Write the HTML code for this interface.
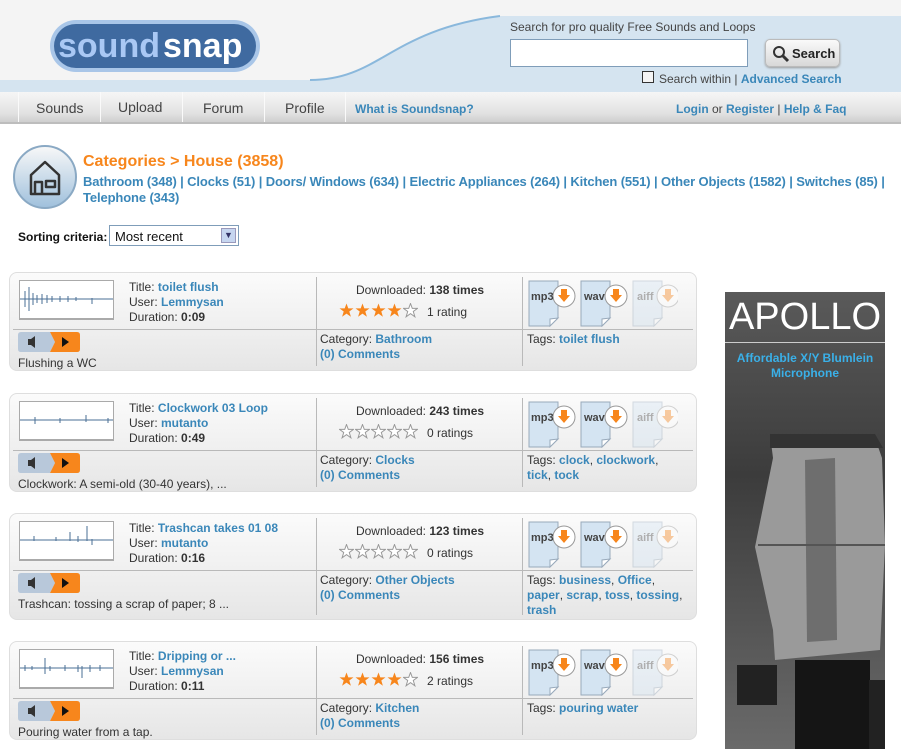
<!DOCTYPE html>
<html><head><meta charset="utf-8"><style>
*{margin:0;padding:0;box-sizing:border-box}
body{width:901px;height:749px;overflow:hidden;background:#fff;font-family:"Liberation Sans",Arial,sans-serif;font-size:12px;color:#333;position:relative}
a{color:#3a87b9;text-decoration:none;font-weight:bold}
.abs{position:absolute}
.hdr{left:0;top:0;width:901px;height:92px;background:#f4f4f4}
.nav{left:0;top:92px;width:901px;height:32px;background:linear-gradient(#f6f6f6,#e2e2e2 70%,#cfcfcf);border-bottom:2px solid #bdbdbd}
.nav .it{position:absolute;top:8px;font-size:14px;color:#444}
.sep{position:absolute;top:0;width:1px;height:30px;background:#d0d0d0;border-right:1px solid #fafafa}
.card{position:absolute;left:9px;width:688px;border-radius:8px;background:linear-gradient(#fbfbfb,#e6e6e6);border:1px solid #dedede}
.card .v{position:absolute;width:1px;background:#b9b9b9;top:4px;bottom:4px}
.card .h{position:absolute;left:3px;right:3px;top:56px;height:1px;background:#b9b9b9}
.wf{position:absolute;left:9px;top:7px;width:95px;height:40px;background:#fff;border:1px solid #aaa;border-bottom:2px solid #aaa}
.meta{position:absolute;left:119px;top:7px;line-height:15px;font-size:12px}
.dl{position:absolute;left:310px;width:200px;top:10px;text-align:center;font-size:12px}
.stars{position:absolute;left:329px;top:30px}
.rt{position:absolute;left:417px;top:32px}
.icons{position:absolute;left:518px;top:7px}
.play{position:absolute;left:8px;top:59px;width:62px;height:20px}
.desc{position:absolute;left:8px;top:83px}
.cat{position:absolute;left:310px;top:59px;line-height:15px}
.tag{position:absolute;left:517px;top:59px;line-height:15px;width:160px}
</style></head><body>
<svg width="0" height="0" style="position:absolute">
<defs>
<symbol id="st" viewBox="0 0 15 15"><path d="M7.5 0.5L9.3 5.4H14.5L10.3 8.5L11.9 13.8L7.5 10.6L3.1 13.8L4.7 8.5L0.5 5.4H5.7Z"/></symbol>
<symbol id="pg" viewBox="0 0 50 47"><path d="M1 1H30V38L22 46H1Z" fill="#d4e4f2" stroke="#9ab"/><path d="M30 38L22 46V39Z" fill="#fff" stroke="#9ab"/><circle cx="36" cy="16" r="11" fill="#fff" stroke="#999"/><path d="M33 9H39V15H42L36 22L30 15H33Z" fill="#f7861c"/></symbol>
</defs></svg>
<div class="abs hdr"></div>
<svg class="abs" style="left:0;top:0" width="901" height="93">
<path d="M0 80 H310 C380 80 390 30 500 16 V92 H0Z" fill="#d5e4f0"/>
<path d="M310 80 C380 80 390 30 500 16" fill="none" stroke="#8ab8dc" stroke-width="2"/>
<rect x="500" y="16" width="401" height="76" fill="#d5e4f0"/>
<g>
<rect x="50" y="20" width="210" height="52" rx="26" fill="#a9c6e8"/>
<rect x="54" y="24" width="202" height="44" rx="22" fill="#3f6aa0"/>
<text x="58" y="57" font-family="Liberation Sans" font-weight="bold" font-size="34" fill="#a9c8f4">sound</text>
<text x="163" y="57" font-family="Liberation Sans" font-weight="bold" font-size="34" fill="#fff">snap</text>
</g></svg>
<div class="abs" style="left:510px;top:20px;font-size:12px;color:#444">Search for pro quality Free Sounds and Loops</div>
<div class="abs" style="left:510px;top:39px;width:238px;height:28px;background:#fff;border:1px solid #7f9db9"></div>
<div class="abs" style="left:765px;top:39px;width:75px;height:28px;border-radius:5px;background:linear-gradient(#fafafa,#d8d8d8);border:1px solid #bbb;box-shadow:0 1px 2px #999;font-weight:bold;font-size:13px;color:#222;padding:6px 0 0 26px">Search</div>
<svg class="abs" style="left:772px;top:45px" width="18" height="18"><circle cx="7" cy="7" r="5" fill="none" stroke="#333" stroke-width="2"/><path d="M11 11 L16 16" stroke="#333" stroke-width="3"/></svg>
<div class="abs" style="left:642px;top:71px;width:12px;height:12px;border:1px solid #333;background:#f4f4f4"></div>
<div class="abs" style="left:659px;top:72px;color:#444">Search within | <a>Advanced Search</a></div>
<div class="abs nav">
<div class="sep" style="left:18px"></div><span class="it" style="left:36px">Sounds</span>
<div class="sep" style="left:100px"></div><span class="it" style="left:118px;top:7px">Upload</span>
<div class="sep" style="left:182px"></div><span class="it" style="left:203px">Forum</span>
<div class="sep" style="left:264px"></div><span class="it" style="left:285px">Profile</span>
<div class="sep" style="left:345px"></div><a class="it" style="left:355px;top:10px;font-size:12px;color:#3a87b9">What is Soundsnap?</a>
<span class="it" style="left:676px;top:10px;font-size:12px"><a>Login</a> or <a>Register</a> | <a>Help &amp; Faq</a></span>
</div>
<svg class="abs" style="left:12px;top:144px" width="66" height="66"><defs><linearGradient id="g" x1="0" y1="0" x2="0" y2="1"><stop offset="0" stop-color="#f8f8f8"/><stop offset="1" stop-color="#9fc0dc"/></linearGradient></defs>
<circle cx="33" cy="33" r="31" fill="url(#g)" stroke="#8aa9c4" stroke-width="2"/>
<path d="M19 50 V31 L33 18 L47 31 V50 Z M23 50 V38 H30 V50 M34 37 H43 V43 H34Z" fill="none" stroke="#333" stroke-width="2.5" stroke-linejoin="round"/></svg>
<div class="abs" style="left:83px;top:153px;font-size:16px;font-weight:bold;color:#f7861c">Categories &gt; House (3858)</div>
<div class="abs" style="left:83px;top:174px;width:818px;line-height:16px;font-size:13px;letter-spacing:-0.12px;color:#3a87b9;font-weight:bold">Bathroom (348) | Clocks (51) | Doors/ Windows (634) | Electric Appliances (264) | Kitchen (551) | Other Objects (1582) | Switches (85) |<br>Telephone (343)</div>
<div class="abs" style="left:18px;top:230px;font-weight:bold;color:#111">Sorting criteria:</div>
<div class="abs" style="left:109px;top:225px;width:130px;height:21px;border:1px solid #7f9db9;background:#fff;font-size:13px;padding:3px 5px;color:#111">Most recent</div>
<div class="abs" style="left:221px;top:228px;width:15px;height:15px;background:#c6d6f0;border:1px solid #99b;font-size:9px;color:#336;text-align:center;line-height:13px">&#9660;</div>

<!-- ad -->
<div class="abs" style="left:725px;top:292px;width:160px;height:457px;background:linear-gradient(#5a5a5a,#3c3c3c 40%,#6a6a6a)"></div>
<div class="abs" style="left:725px;top:296px;width:160px;text-align:center;font-size:38px;color:#fff;letter-spacing:0">APOLLO</div>
<div class="abs" style="left:725px;top:342px;width:160px;height:1px;background:#ccc"></div>
<div class="abs" style="left:725px;top:351px;width:160px;text-align:center;font-size:12px;font-weight:bold;color:#3ab0e8;line-height:15px">Affordable X/Y Blumlein<br>Microphone</div>
<svg class="abs" style="left:725px;top:430px" width="160" height="319">
<path d="M46 12 L150 8 L157 28 L160 115 L155 220 L50 230 L48 200 L30 117 L48 28Z" fill="#9a9a9a"/>
<path d="M80 30 L110 28 L112 210 L82 212Z" fill="#6e6e6e"/>
<path d="M45 4 H150 L158 18 H45Z" fill="#333"/>
<path d="M33 115 H160" stroke="#555" stroke-width="2"/>
<rect x="70" y="230" width="75" height="89" fill="#151515"/>
<rect x="12" y="235" width="40" height="40" fill="#222"/>
<rect x="144" y="250" width="16" height="69" fill="#222"/>
</svg>

<div class="card" style="top:272px;height:99px">
<div class="v" style="left:306px"></div><div class="v" style="left:512px"></div><div class="h"></div>
<div class="wf"><svg width="93" height="37"><path d="M0 18H93" stroke="#4a6f95"/><path d="M5 10V26M9 6V30M13 12V24M17 14V22M22 13V23M27 14V22M32 15V21M40 15V21M48 15V21M56 16V20M72 17V23" stroke="#4a6f95"/></svg></div>
<div class="meta">Title: <a>toilet flush</a><br>User: <a>Lemmysan</a><br>Duration: <b>0:09</b></div>
<div class="dl">Downloaded: <b>138 times</b></div>
<svg class="stars" width="80" height="16"><g fill="#f7861c"><use href="#st" x="0" width="15" height="15"/><use href="#st" x="16" width="15" height="15"/><use href="#st" x="32" width="15" height="15"/><use href="#st" x="48" width="15" height="15"/></g><use href="#st" x="64" width="15" height="15" fill="#fff" stroke="#999"/></svg><div class="rt">1 rating</div>
<div class="play"><svg width="62" height="20"><path d="M3 0H32L37 10L32 20H3Q0 20 0 17V3Q0 0 3 0Z" fill="#b8c8da"/><path d="M32 0H59Q62 0 62 3V17Q62 20 59 20H32L37 10Z" fill="#f7861c"/><path d="M10 7H13L17 4V16L13 13H10Z" fill="#333"/><path d="M44 5L51 10L44 15Z" fill="#111"/></svg></div>
<div class="desc">Flushing a WC</div>
<div class="cat">Category: <a>Bathroom</a><br><a>(0) Comments</a></div>
<div class="tag">Tags: <a>toilet flush</a></div>
<svg class="icons" width="150" height="47"><use href="#pg" width="50" height="47"/><text x="3" y="20" font-family="Liberation Sans" font-weight="bold" font-size="11" fill="#444">mp3</text><use href="#pg" x="52" width="50" height="47"/><text x="56" y="20" font-family="Liberation Sans" font-weight="bold" font-size="11" fill="#444">wav</text><g opacity="0.4"><use href="#pg" x="104" width="50" height="47"/><text x="109" y="20" font-family="Liberation Sans" font-weight="bold" font-size="11" fill="#444">aiff</text></g></svg>
</div>

<div class="card" style="top:393px;height:99px">
<div class="v" style="left:306px"></div><div class="v" style="left:512px"></div><div class="h"></div>
<div class="wf"><svg width="93" height="37"><path d="M0 18H93" stroke="#4a6f95"/><path d="M15 15V22M40 16V21M66 13V20M88 16V21" stroke="#4a6f95"/></svg></div>
<div class="meta">Title: <a>Clockwork 03 Loop</a><br>User: <a>mutanto</a><br>Duration: <b>0:49</b></div>
<div class="dl">Downloaded: <b>243 times</b></div>
<svg class="stars" width="80" height="16"><g fill="#fff" stroke="#999"><use href="#st" x="0" width="15" height="15"/><use href="#st" x="16" width="15" height="15"/><use href="#st" x="32" width="15" height="15"/><use href="#st" x="48" width="15" height="15"/><use href="#st" x="64" width="15" height="15"/></g></svg><div class="rt">0 ratings</div>
<div class="play"><svg width="62" height="20"><path d="M3 0H32L37 10L32 20H3Q0 20 0 17V3Q0 0 3 0Z" fill="#b8c8da"/><path d="M32 0H59Q62 0 62 3V17Q62 20 59 20H32L37 10Z" fill="#f7861c"/><path d="M10 7H13L17 4V16L13 13H10Z" fill="#333"/><path d="M44 5L51 10L44 15Z" fill="#111"/></svg></div>
<div class="desc">Clockwork: A semi-old (30-40 years), ...</div>
<div class="cat">Category: <a>Clocks</a><br><a>(0) Comments</a></div>
<div class="tag">Tags: <a>clock</a>, <a>clockwork</a>,<br><a>tick</a>, <a>tock</a></div>
<svg class="icons" width="150" height="47"><use href="#pg" width="50" height="47"/><text x="3" y="20" font-family="Liberation Sans" font-weight="bold" font-size="11" fill="#444">mp3</text><use href="#pg" x="52" width="50" height="47"/><text x="56" y="20" font-family="Liberation Sans" font-weight="bold" font-size="11" fill="#444">wav</text><g opacity="0.4"><use href="#pg" x="104" width="50" height="47"/><text x="109" y="20" font-family="Liberation Sans" font-weight="bold" font-size="11" fill="#444">aiff</text></g></svg>
</div>

<div class="card" style="top:513px;height:107px">
<div class="v" style="left:306px"></div><div class="v" style="left:512px"></div><div class="h"></div>
<div class="wf"><svg width="93" height="37"><path d="M0 18H93" stroke="#4a6f95"/><path d="M14 14V19M36 15V19M50 10V19M58 14V20M67 4V19M72 17V23" stroke="#4a6f95"/></svg></div>
<div class="meta">Title: <a>Trashcan takes 01 08</a><br>User: <a>mutanto</a><br>Duration: <b>0:16</b></div>
<div class="dl">Downloaded: <b>123 times</b></div>
<svg class="stars" width="80" height="16"><g fill="#fff" stroke="#999"><use href="#st" x="0" width="15" height="15"/><use href="#st" x="16" width="15" height="15"/><use href="#st" x="32" width="15" height="15"/><use href="#st" x="48" width="15" height="15"/><use href="#st" x="64" width="15" height="15"/></g></svg><div class="rt">0 ratings</div>
<div class="play"><svg width="62" height="20"><path d="M3 0H32L37 10L32 20H3Q0 20 0 17V3Q0 0 3 0Z" fill="#b8c8da"/><path d="M32 0H59Q62 0 62 3V17Q62 20 59 20H32L37 10Z" fill="#f7861c"/><path d="M10 7H13L17 4V16L13 13H10Z" fill="#333"/><path d="M44 5L51 10L44 15Z" fill="#111"/></svg></div>
<div class="desc">Trashcan: tossing a scrap of paper; 8 ...</div>
<div class="cat">Category: <a>Other Objects</a><br><a>(0) Comments</a></div>
<div class="tag">Tags: <a>business</a>, <a>Office</a>,<br><a>paper</a>, <a>scrap</a>, <a>toss</a>, <a>tossing</a>,<br><a>trash</a></div>
<svg class="icons" width="150" height="47"><use href="#pg" width="50" height="47"/><text x="3" y="20" font-family="Liberation Sans" font-weight="bold" font-size="11" fill="#444">mp3</text><use href="#pg" x="52" width="50" height="47"/><text x="56" y="20" font-family="Liberation Sans" font-weight="bold" font-size="11" fill="#444">wav</text><g opacity="0.4"><use href="#pg" x="104" width="50" height="47"/><text x="109" y="20" font-family="Liberation Sans" font-weight="bold" font-size="11" fill="#444">aiff</text></g></svg>
</div>

<div class="card" style="top:641px;height:99px">
<div class="v" style="left:306px"></div><div class="v" style="left:512px"></div><div class="h"></div>
<div class="wf"><svg width="93" height="37"><path d="M0 18H93" stroke="#4a6f95"/><path d="M5 15V21M12 16V20M25 8V24M30 16V21M45 15V21M58 15V22M62 16V28M70 15V22M80 15V21" stroke="#4a6f95"/></svg></div>
<div class="meta">Title: <a>Dripping or ...</a><br>User: <a>Lemmysan</a><br>Duration: <b>0:11</b></div>
<div class="dl">Downloaded: <b>156 times</b></div>
<svg class="stars" width="80" height="16"><g fill="#f7861c"><use href="#st" x="0" width="15" height="15"/><use href="#st" x="16" width="15" height="15"/><use href="#st" x="32" width="15" height="15"/><use href="#st" x="48" width="15" height="15"/></g><use href="#st" x="64" width="15" height="15" fill="#fff" stroke="#999"/></svg><div class="rt">2 ratings</div>
<div class="play"><svg width="62" height="20"><path d="M3 0H32L37 10L32 20H3Q0 20 0 17V3Q0 0 3 0Z" fill="#b8c8da"/><path d="M32 0H59Q62 0 62 3V17Q62 20 59 20H32L37 10Z" fill="#f7861c"/><path d="M10 7H13L17 4V16L13 13H10Z" fill="#333"/><path d="M44 5L51 10L44 15Z" fill="#111"/></svg></div>
<div class="desc">Pouring water from a tap.</div>
<div class="cat">Category: <a>Kitchen</a><br><a>(0) Comments</a></div>
<div class="tag">Tags: <a>pouring water</a></div>
<svg class="icons" width="150" height="47"><use href="#pg" width="50" height="47"/><text x="3" y="20" font-family="Liberation Sans" font-weight="bold" font-size="11" fill="#444">mp3</text><use href="#pg" x="52" width="50" height="47"/><text x="56" y="20" font-family="Liberation Sans" font-weight="bold" font-size="11" fill="#444">wav</text><g opacity="0.4"><use href="#pg" x="104" width="50" height="47"/><text x="109" y="20" font-family="Liberation Sans" font-weight="bold" font-size="11" fill="#444">aiff</text></g></svg>
</div>
</body></html>
